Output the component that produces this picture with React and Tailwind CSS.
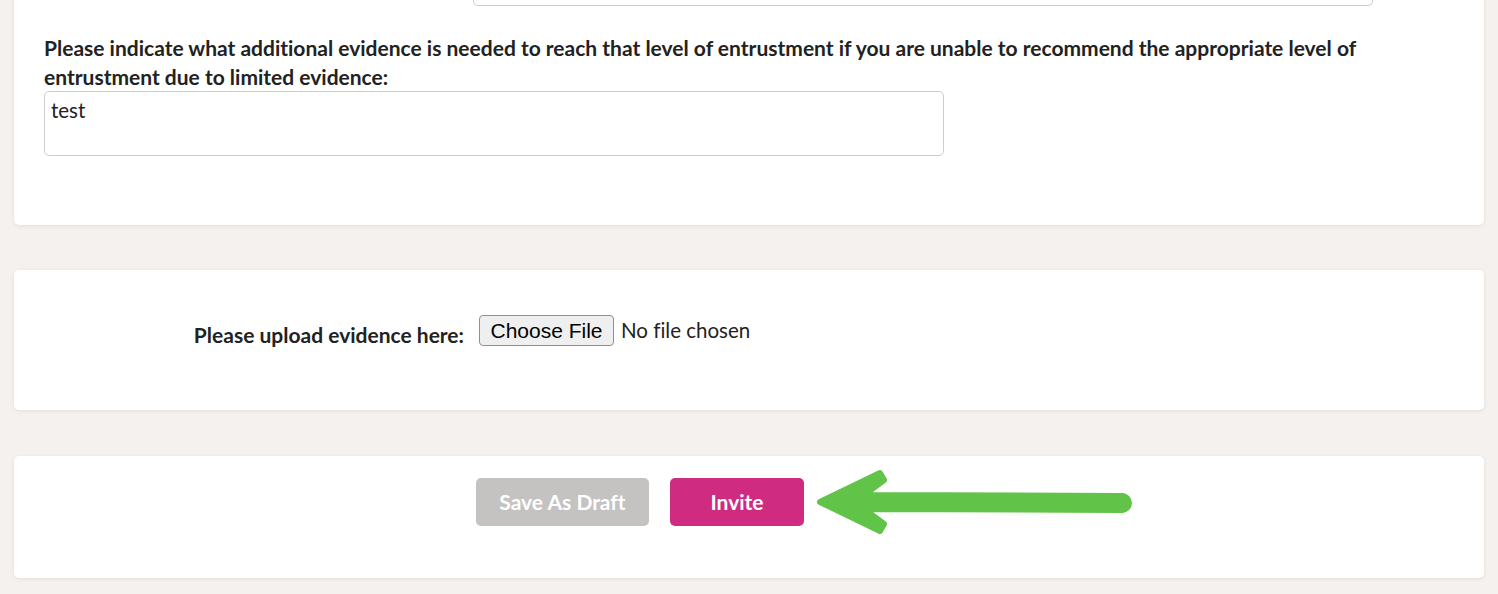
export default function App() {
  return (
    <div
      className="min-h-screen bg-[#f4f1ee] px-[14px] overflow-hidden [font-variant-ligatures:none]"
      style={{ fontFamily: "Lato, 'Open Sans', sans-serif" }}
    >
      {/* card 1: entrustment comments (top of card scrolled off) */}
      <div className="-mt-[60px] bg-white rounded-[5px] shadow-[0_1px_4px_rgba(0,0,0,0.08)] px-[30px] pt-[20px] pb-[69px]">
        <div className="ml-[429px] w-[900px] h-[46px] border border-[#cccccc] rounded-[5px]" />
        <p className="mt-[27px] text-[21px] leading-[29px] font-bold text-[#222222]">
          Please indicate what additional evidence is needed to reach that level of entrustment if you are unable to
          recommend the appropriate level of entrustment due to limited evidence:
        </p>
        <textarea
          defaultValue="test"
          className="block w-[900px] h-[65px] border border-[#cccccc] rounded-[5px] px-[6px] py-[5px] text-[20.5px] leading-[26px] text-[#222222] resize-none outline-none"
        />
      </div>

      {/* card 2: upload */}
      <div className="mt-[45px] h-[140px] bg-white rounded-[5px] shadow-[0_1px_4px_rgba(0,0,0,0.08)] pt-[45px] flex items-start">
        <label className="w-[450px] text-right mt-[5px] text-[21px] leading-[29px] font-bold text-[#222222]">
          Please upload evidence here:
        </label>
        <div className="ml-[15px] flex items-center">
          <span
            className="h-[31px] w-[135px] flex items-center justify-center border border-[#8f8f8f] rounded-[4px] bg-[#efefef] text-[21px] text-black"
            style={{ fontFamily: "'Liberation Sans', Arial, sans-serif" }}
          >
            Choose File
          </span>
          <span className="ml-[7px] text-[20.5px] text-[#222222]">No file chosen</span>
        </div>
      </div>

      {/* card 3: actions */}
      <div className="relative mt-[46px] h-[122px] bg-white rounded-[5px] shadow-[0_1px_4px_rgba(0,0,0,0.08)] pt-[22px] pl-[462px] flex items-start gap-[21px]">
        <button className="w-[173px] h-[48px] rounded-[5px] bg-[#c4c3c1] text-white font-bold text-[21px]">
          Save As Draft
        </button>
        <button className="w-[134px] h-[48px] rounded-[5px] bg-[#cf2c81] text-white font-bold text-[21px]">
          Invite
        </button>
        <svg
          className="absolute left-[796px] top-[8px]"
          width="330"
          height="80"
          viewBox="0 0 330 80"
        >
          <path
            d="M10 38 L70 9 L74 16 L54 31 L312 32 L312 46 L54 45 L74 60 L70 67 Z"
            fill="#61c449"
            stroke="#61c449"
            strokeWidth="6"
            strokeLinejoin="round"
          />
          <circle cx="312" cy="39" r="10" fill="#61c449" />
        </svg>
      </div>
    </div>
  );
}
